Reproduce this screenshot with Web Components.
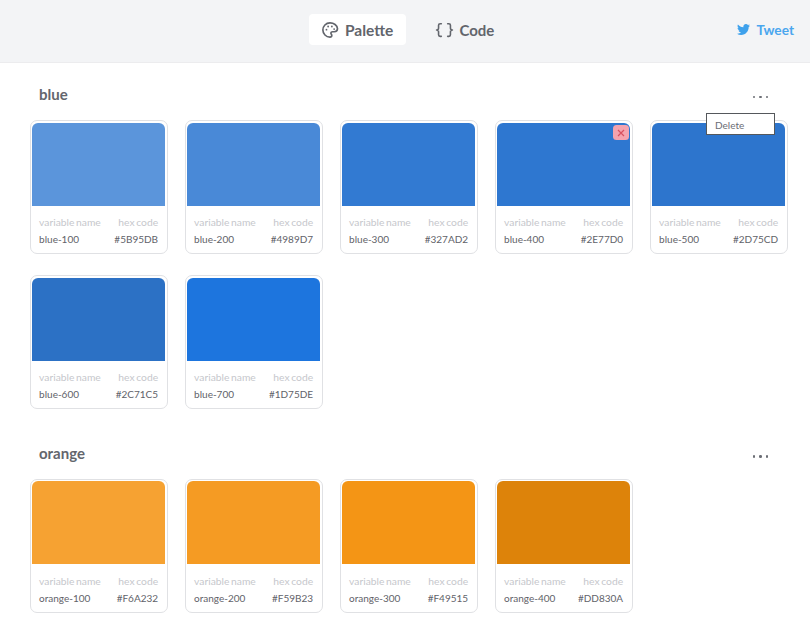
<!DOCTYPE html>
<html>
<head>
<meta charset="utf-8">
<title>Palette</title>
<style>
    html, body { margin: 0; padding: 0; background: #fff; }
    body { font-family: Lato, "Open Sans", sans-serif; color: #5c5f66; width: 810px; height: 631px; overflow: hidden; }
</style>
</head>
<body>
<app-header></app-header>
<palette-group name="blue" data-menu="open" style="--group-top: 17px">
    <color-card name="blue-100" hex="#5B95DB"></color-card>
    <color-card name="blue-200" hex="#4989D7"></color-card>
    <color-card name="blue-300" hex="#327AD2"></color-card>
    <color-card name="blue-400" hex="#2E77D0" deletable></color-card>
    <color-card name="blue-500" hex="#2D75CD"></color-card>
    <color-card name="blue-600" hex="#2C71C5"></color-card>
    <color-card name="blue-700" hex="#1D75DE"></color-card>
</palette-group>
<palette-group name="orange" style="--group-top: 30.5px; --head-gap: 12px">
    <color-card name="orange-100" hex="#F6A232"></color-card>
    <color-card name="orange-200" hex="#F59B23"></color-card>
    <color-card name="orange-300" hex="#F49515"></color-card>
    <color-card name="orange-400" hex="#DD830A"></color-card>
</palette-group>
<script>
class AppHeader extends HTMLElement {
    constructor() {
        super();
        this.root = this.attachShadow({ mode: "open" });
        this.root.innerHTML = `
        <style>
        :host {
            display: flex;
            justify-content: space-between;
            align-items: center;
            background: #f3f4f6;
            border-bottom: 1px solid #ececee;
            box-sizing: border-box;
            height: 63px;
            padding: 0 16px 3px 309px;
            font-size: 15.5px;
            font-weight: 700;
            color: #62656c;
        }
        .tabs { display: flex; gap: 17px; }
        .tab {
            display: flex;
            align-items: center;
            gap: 6px;
            height: 31px;
            padding: 0 13px 0 12px;
            border-radius: 4px;
        }
        .tab.active { background: #fff; }
        .tab.code { gap: 5px; font-size: 15px; }
        svg { display: block; }
        .tweet { display: flex; align-items: center; gap: 6px; color: #4aa6ee; font-size: 13.7px; }
        </style>
        <div class="tabs">
            <div class="tab active">
                <svg width="18" height="18" viewBox="0 0 24 24" fill="none" stroke="#62656c" stroke-width="2.2" stroke-linejoin="round">
                    <path d="M12 2.5C6.5 2.5 2.5 6.8 2.5 12s4.2 9.5 9.5 9.5c1.6 0 2.4-1 2.4-2.2 0-.6-.2-1-.6-1.5-.4-.5-.6-.9-.6-1.5 0-1.2 1-2 2.2-2h2.3c2.6 0 4.3-1.8 4.3-4.2C21.500 5.800 17.200 2.500 12 2.500z"/>
                    <circle cx="7.3" cy="11.5" r="1.2" fill="#62656c" stroke="none"/>
                    <circle cx="9.5" cy="7.3" r="1.2" fill="#62656c" stroke="none"/>
                    <circle cx="14.5" cy="7.3" r="1.2" fill="#62656c" stroke="none"/>
                    <circle cx="17.5" cy="10.8" r="1.2" fill="#62656c" stroke="none"/>
                </svg>
                <span>Palette</span>
            </div>
            <div class="tab code">
                <svg width="19" height="16" viewBox="0 0 24 20" fill="none" stroke="#62656c" stroke-width="2" stroke-linecap="round" stroke-linejoin="round">
                    <path d="M8 2H6.500C5 2 4.500 3 4.500 4v3.500C4.500 9 3.500 10 2 10c1.500 0 2.500 1 2.500 2.500V16c0 1 .5 2 2 2H8"/>
                    <path d="M16 2h1.500c1.500 0 2 1 2 2v3.500c0 1.500 1 2.500 2.500 2.500-1.500 0-2.500 1-2.500 2.500V16c0 1-.5 2-2 2H16"/>
                </svg>
                <span>Code</span>
            </div>
        </div>
        <div class="tweet">
            <svg width="13" height="11" viewBox="0 0 24 20" fill="#3ea1ec">
                <path d="M24 2.400c-.9.400-1.800.7-2.800.8 1-.6 1.800-1.600 2.200-2.700-1 .6-2 1-3.100 1.200C19.300.7 18 0 16.600 0c-3.200 0-5.500 3-4.800 6C7.700 5.800 4.100 3.800 1.700.9.400 3.100 1 6 3.200 7.500c-.8 0-1.600-.2-2.200-.6 0 2.300 1.600 4.400 4 4.900-.7.200-1.500.2-2.200.1.600 2 2.400 3.400 4.600 3.400C5.300 17.400 2.700 18.100 0 17.800 2.200 19.200 4.800 20 7.500 20c9.100 0 14.300-7.700 14-14.600 1-.7 1.800-1.600 2.500-3z"/>
            </svg>
            <span>Tweet</span>
        </div>`;
    }
}

class PaletteGroup extends HTMLElement {
    static get observedAttributes() {
        return ["name"];
    }

    constructor() {
        super();
        this.root = this.attachShadow({ mode: "open" });
        this.root.innerHTML = `
        <style>
        :host {
            display: block;
            position: relative;
            padding: var(--group-top, 18px) 0 0 29.6px;
        }
        .head {
            display: flex;
            justify-content: space-between;
            align-items: center;
            height: 27px;
            padding: 0 42px 0 9.400px;
            margin-bottom: var(--head-gap, 13px);
        }
        .title { font-size: 15px; font-weight: 700; color: #63666d; }
        .dots { display: flex; gap: 4px; padding-top: 7px; }
        .dots i { width: 2.500px; height: 2.500px; border-radius: 50%; background: #6b6e75; }
        .cards { display: flex; flex-wrap: wrap; gap: 21px 17px; }
        .menu {
            display: none;
            position: absolute;
            left: 706px;
            top: 50px;
            width: 69px;
            height: 22px;
            line-height: 22px;
            padding-left: 8px;
            box-sizing: border-box;
            background: #fff;
            border: 1px solid #55585c;
            font-size: 10px;
            color: #6a6d74;
            z-index: 2;
        }
        :host([data-menu="open"]) .menu { display: block; }
        </style>
        <div class="head">
            <span class="title"></span>
            <span class="dots"><i></i><i></i><i></i></span>
        </div>
        <div class="menu">Delete</div>
        <div class="cards"><slot></slot></div>`;
        this.titleElement = this.root.querySelector(".title");
    }

    attributeChangedCallback(name, oldValue, newValue) {
        this.titleElement.textContent = newValue;
    }
}

class ColorCard extends HTMLElement {
    constructor() {
        super();
        this.root = this.attachShadow({ mode: "open" });
        this.root.innerHTML = `
        <style>
        :host {
            display: block;
            position: relative;
            width: 138px;
            height: 134px;
            box-sizing: border-box;
            padding: 1.500px;
            border: 1.500px solid #e0e1e4;
            border-radius: 7px;
            background: #fff;
        }
        .swatch { height: 83px; border-radius: 6px 6px 0 0; }
        .row { display: flex; justify-content: space-between; padding: 0 7px; }
        .labels { margin-top: 10.500px; font-size: 10.300px; word-spacing: -1px; line-height: 12px; color: #c6c7cc; }
        .values { margin-top: 5px; font-size: 10px; line-height: 12px; color: #5f6269; }
        .remove {
            position: absolute;
            top: 4px;
            right: 3px;
            width: 16px;
            height: 15px;
            border-radius: 3.500px;
            background: #f5a3ae;
        }
        .remove svg { display: block; margin: 3.500px auto 0; }
        </style>
        <div class="swatch"></div>
        <div class="row labels"><span>variable name</span><span>hex code</span></div>
        <div class="row values"><span class="name"></span><span class="hex"></span></div>`;
    }

    connectedCallback() {
        const hex = this.getAttribute("hex");
        this.root.querySelector(".swatch").style.background = hex;
        this.root.querySelector(".name").textContent = this.getAttribute("name");
        this.root.querySelector(".hex").textContent = hex;
        if(this.hasAttribute("deletable")) {
            const remove = document.createElement("div");
            remove.className = "remove";
            remove.innerHTML = `<svg width="8" height="8" viewBox="0 0 8 8" stroke="#d8505f" stroke-width="1.200"><path d="M1 1l6 6M7 1L1 7"/></svg>`;
            this.root.appendChild(remove);
        }
    }
}

customElements.define("app-header", AppHeader);
customElements.define("palette-group", PaletteGroup);
customElements.define("color-card", ColorCard);
</script>
</body>
</html>
